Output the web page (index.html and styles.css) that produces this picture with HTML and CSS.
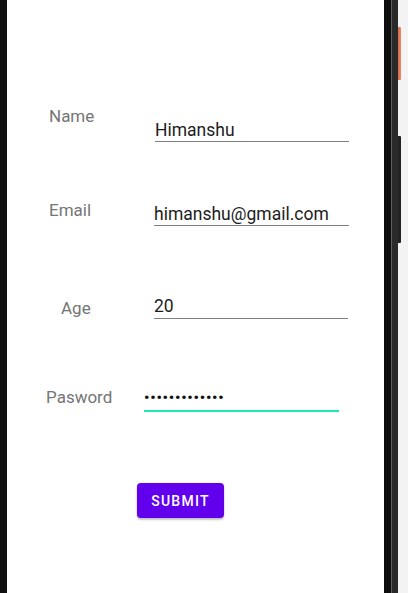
FILE: index.html
```html
<!DOCTYPE html>
<html>
<head>
<meta charset="utf-8">
<link rel="stylesheet" href="styles.css">
</head>
<body>
  <div class="strip-left"></div>
  <main class="screen">
    <div class="row row-name">
      <div class="label-cell"><span class="label">Name</span></div>
      <div class="field">Himanshu</div>
    </div>
    <div class="row row-email">
      <div class="label-cell"><span class="label">Email</span></div>
      <div class="field">himanshu@gmail.com</div>
    </div>
    <div class="row row-age">
      <div class="label-cell"><span class="label">Age</span></div>
      <div class="field">20</div>
    </div>
    <div class="row row-pass">
      <div class="label-cell"><span class="label">Pasword</span></div>
      <div class="field field-focused">•••••••••••••</div>
    </div>
    <div class="actions">
      <button class="submit">SUBMIT</button>
    </div>
  </main>
  <div class="frame">
    <div class="bezel"></div>
    <div class="edge"></div>
    <div class="rim"></div>
    <div class="side">
      <div class="power"></div>
      <div class="volume"></div>
    </div>
  </div>
</body>
</html>
```

FILE: styles.css
```css
html, body {
  margin: 0;
  padding: 0;
}
body {
  display: flex;
  width: 408px;
  height: 593px;
  overflow: hidden;
  font-family: Roboto, "Noto Sans", sans-serif;
  background: #f3f3f3;
}
.strip-left {
  width: 7px;
  background: #111111;
  flex: none;
}
.screen {
  width: 377px;
  flex: none;
  background: #ffffff;
  padding-top: 107px;
  box-sizing: border-box;
}
.row {
  display: flex;
  align-items: flex-start;
}
.label-cell {
  flex: none;
  box-sizing: border-box;
}
.label {
  display: block;
  font-size: 17px;
  line-height: 19px;
  color: #757575;
}
.field {
  flex: none;
  box-sizing: border-box;
  font-size: 17.5px;
  line-height: 20px;
  color: #1c1c1c;
  border-bottom: 1px solid #808080;
  white-space: nowrap;
}
.row-name { height: 94px; }
.row-name .label-cell { width: 148px; padding-left: 42px; }
.row-name .field { width: 194px; margin-top: 13px; padding-bottom: 1px; }

.row-email { height: 95px; }
.row-email .label-cell { width: 147px; padding-left: 42px; }
.row-email .field { width: 195px; margin-top: 3px; padding-bottom: 1px; }

.row-age { height: 91px; }
.row-age .label-cell { width: 147px; padding-left: 54px; padding-top: 3px; }
.row-age .field { width: 194px; padding-bottom: 2px; }

.row-pass { height: 96px; }
.row-pass .label-cell { width: 137px; padding-left: 39px; padding-top: 1px; }
.row-pass .field { width: 195px; padding-top: 1px; padding-bottom: 2px; }
.field-focused {
  border-bottom: 2px solid #1de9b6;
  font-size: 15px;
  font-weight: 700;
  letter-spacing: 0.8px;
  color: #111;
}
.actions {
  padding-left: 130px;
}
.submit {
  display: block;
  width: 87px;
  height: 35px;
  padding: 0;
  border: none;
  border-radius: 4px;
  background: #6200ee;
  color: #ffffff;
  font-family: Roboto, sans-serif;
  font-size: 14px;
  font-weight: 500;
  letter-spacing: 1.25px;
  box-shadow: 0 2px 2px rgba(0,0,0,0.22), 0 0 2px rgba(0,0,0,0.12);
}
.frame {
  display: flex;
  flex: none;
  width: 24px;
}
.bezel { width: 7px; background: #0d0d0d; }
.edge { width: 1px; background: #5e5e5e; }
.rim { width: 6px; background: #2a2a2a; }
.side {
  width: 10px;
  background: #f3f3f3;
  position: relative;
}
.power {
  position: absolute;
  left: 0;
  top: 27px;
  width: 3px;
  height: 53px;
  background: linear-gradient(to right, #d86848, #ee8a6c);
  border-radius: 0 1px 1px 0;
}
.volume {
  position: absolute;
  left: 0;
  top: 136px;
  width: 3px;
  height: 107px;
  background: #222222;
  border-radius: 0 1px 1px 0;
}
```
